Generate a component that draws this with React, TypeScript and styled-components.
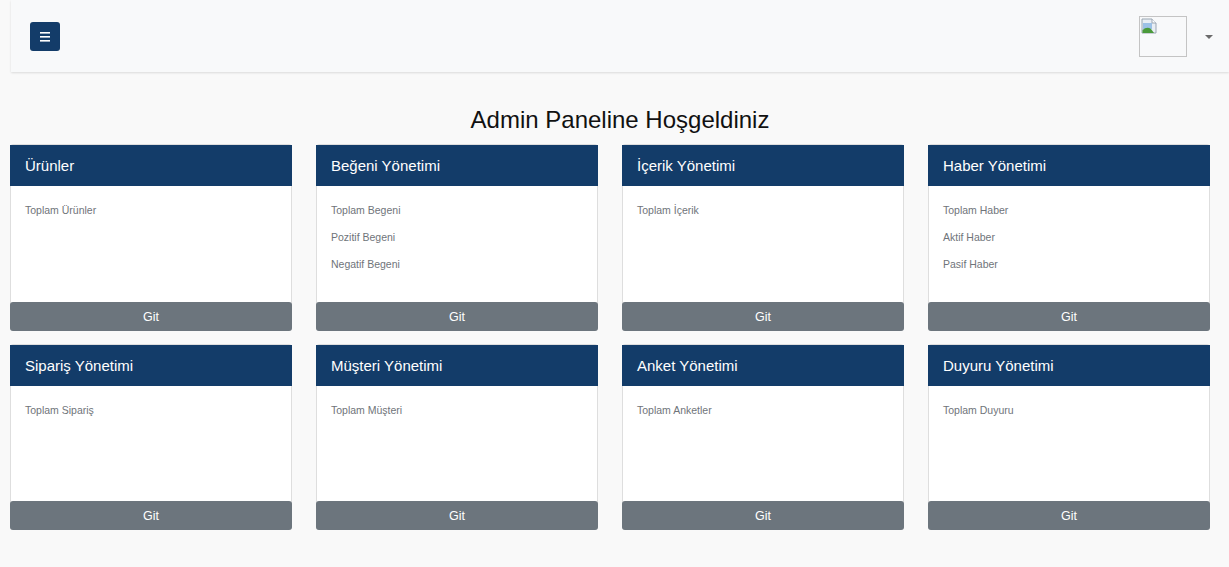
import React from "react";
import styled, { createGlobalStyle } from "styled-components";

const GlobalStyle = createGlobalStyle`
  html, body { margin: 0; padding: 0; }
  body {
    background: #f9f9f9;
    font-family: "Liberation Sans", Arial, sans-serif;
    color: #212529;
  }
  * { box-sizing: border-box; }
`;

const Page = styled.div`
  width: 1229px;
  min-height: 567px;
`;

const Navbar = styled.nav`
  margin-left: 11px;
  height: 72px;
  background: #f8f9fa;
  box-shadow: 0 1px 2px rgba(0, 0, 0, 0.12);
  display: flex;
  align-items: center;
  justify-content: space-between;
  padding: 0 16px 0 19px;
`;

const MenuButton = styled.button`
  width: 30px;
  height: 29px;
  border: none;
  border-radius: 3px;
  background: #133c69;
  display: flex;
  align-items: center;
  justify-content: center;
  padding: 0;
  margin-top: 1px;
`;

const UserArea = styled.div`
  display: flex;
  align-items: center;
  gap: 18px;
`;

const Avatar = styled.div`
  width: 48px;
  height: 41px;
  border: 1px solid #c4c4c4;
  margin-top: 1px;
  position: relative;
`;

const BrokenIcon = styled.svg`
  position: absolute;
  left: 1px;
  top: 1px;
`;

const Caret = styled.span`
  width: 0;
  height: 0;
  border-left: 4px solid transparent;
  border-right: 4px solid transparent;
  border-top: 4px solid #6b6b6b;
  margin-top: 2px;
`;

const Title = styled.h1`
  margin: 33px 0 0 11px;
  font-size: 24px;
  font-weight: 400;
  line-height: 30px;
  text-align: center;
  color: #111;
`;

const Grid = styled.div`
  display: grid;
  grid-template-columns: repeat(4, 282px);
  column-gap: 24px;
  row-gap: 13px;
  padding-left: 10px;
  margin-top: 9px;
`;

const Card = styled.div`
  background: #fff;
  border: 1px solid #dedede;
  border-radius: 3px;
  display: flex;
  flex-direction: column;
`;

const CardHeader = styled.div`
  background: #133c69;
  color: #fff;
  height: 41px;
  margin: 0 -1px;
  padding: 0 15px;
  display: flex;
  align-items: center;
  font-size: 15px;
`;

const CardBody = styled.div<{ $h: number }>`
  height: ${(p) => p.$h}px;
  padding: 18px 14px 0;
  display: flex;
  flex-direction: column;
  gap: 14px;
`;

const Stat = styled.div`
  font-size: 10.5px;
  line-height: 13px;
  color: #6f747a;
`;

const GoButton = styled.button`
  height: 29px;
  width: calc(100% + 2px);
  margin: 0 -1px -1px;
  border: none;
  border-radius: 3px;
  background: #6c757d;
  color: #fff;
  font-family: "Liberation Sans", Arial, sans-serif;
  font-size: 12.5px;
  padding: 0;
`;

const cards: { title: string; items: string[] }[] = [
  { title: "Ürünler", items: ["Toplam Ürünler"] },
  { title: "Beğeni Yönetimi", items: ["Toplam Begeni", "Pozitif Begeni", "Negatif Begeni"] },
  { title: "İçerik Yönetimi", items: ["Toplam İçerik"] },
  { title: "Haber Yönetimi", items: ["Toplam Haber", "Aktif Haber", "Pasif Haber"] },
  { title: "Sipariş Yönetimi", items: ["Toplam Sipariş"] },
  { title: "Müşteri Yönetimi", items: ["Toplam Müşteri"] },
  { title: "Anket Yönetimi", items: ["Toplam Anketler"] },
  { title: "Duyuru Yönetimi", items: ["Toplam Duyuru"] },
];

export default function App() {
  return (
    <Page>
      <GlobalStyle />
      <Navbar>
        <MenuButton aria-label="menu">
          <svg width="10" height="10" viewBox="0 0 10 10">
            <rect x="0" y="0" width="10" height="1.6" fill="#fff" />
            <rect x="0" y="4" width="10" height="1.6" fill="#fff" />
            <rect x="0" y="8" width="10" height="1.6" fill="#fff" />
          </svg>
        </MenuButton>
        <UserArea>
          <Avatar>
            <BrokenIcon width="16" height="16" viewBox="0 0 16 16">
              <path d="M1 1 H11 L15 5 V15 H1 Z" fill="#e9eef4" stroke="#9aa6b2" strokeWidth="1" />
              <path d="M11 1 V5 H15" fill="#fff" stroke="#9aa6b2" strokeWidth="1" />
              <rect x="2" y="5" width="9" height="6" fill="#9cc1e6" />
              <path d="M1.5 15 L1.5 12 Q6 8 10 11 L13 15 Z" fill="#4a9a3a" />
            </BrokenIcon>
          </Avatar>
          <Caret />
        </UserArea>
      </Navbar>
      <Title>Admin Paneline Hoşgeldiniz</Title>
      <Grid>
        {cards.map((c, i) => (
          <Card key={c.title}>
            <CardHeader>{c.title}</CardHeader>
            <CardBody $h={i < 4 ? 116 : 115}>
              {c.items.map((it) => (
                <Stat key={it}>{it}</Stat>
              ))}
            </CardBody>
            <GoButton>Git</GoButton>
          </Card>
        ))}
      </Grid>
    </Page>
  );
}
